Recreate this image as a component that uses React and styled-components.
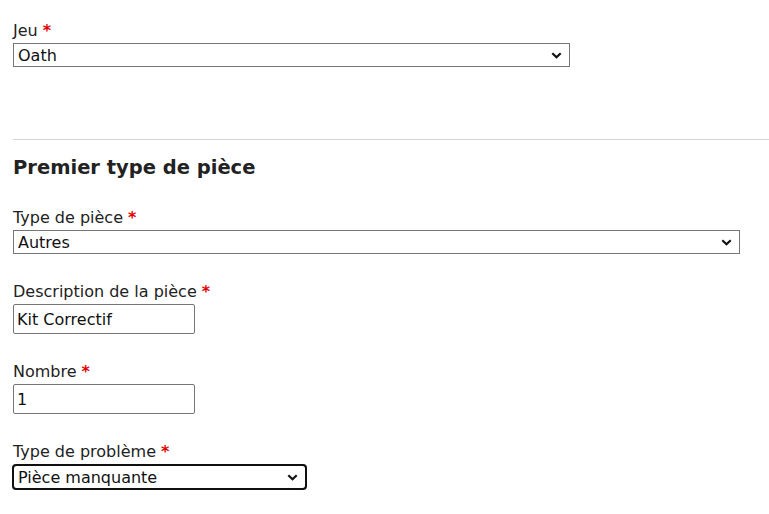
import React from 'react'
import styled, { createGlobalStyle } from 'styled-components'

const GlobalStyle = createGlobalStyle`
    body {
        margin: 0;
        background: #fff;
        font-family: "DejaVu Sans", "Noto Sans", sans-serif;
        color: #222;
    }
`

const chevron = `url("data:image/svg+xml,%3Csvg xmlns='http://www.w3.org/2000/svg' width='11' height='7' viewBox='0 0 11 7'%3E%3Cpath d='M1.3 1.3 L5.5 5.3 L9.7 1.3' fill='none' stroke='%23111' stroke-width='2.2'/%3E%3C/svg%3E")`

const Page = styled.form `
    padding: 19px 0 0 13px;
`

const Field = styled.div `
    display: flex;
    flex-direction: column;
    align-items: flex-start;
    margin-bottom: 26px;
`

const Label = styled.label `
    font-size: 16px;
    line-height: 24px;
    height: 24px;
    color: #222;
`

const Required = styled.span `
    color: #e00000;
    font-weight: 700;
    margin-left: 5px;
`

const Select = styled.select `
    appearance: none;
    width: ${props => props.width}px;
    height: 24px;
    font-family: inherit;
    font-size: 16px;
    color: #111;
    background: #fff ${chevron} no-repeat right 7px center;
    border: 1px solid #767676;
    border-radius: ${props => props.focused ? '3px' : '0'};
    padding: 0 24px 0 4px;
    margin: ${props => props.focused ? '1px 0 0 0' : '0'};
    outline: ${props => props.focused ? '2px solid #101010' : 'none'};
    outline-offset: -1px;
    box-sizing: border-box;
`

const Input = styled.input `
    width: 182px;
    height: 30px;
    font-family: inherit;
    font-size: 16px;
    color: #111;
    border: 1px solid #767676;
    border-radius: 2px;
    padding: 0 3px;
    margin: 0;
    box-sizing: border-box;
`

const Divider = styled.hr `
    border: none;
    border-top: 1px solid #d4d4d4;
    margin: 72px 0 14px 0;
`

const Heading = styled.h2 `
    font-size: 19.5px;
    font-weight: 700;
    line-height: 28px;
    margin: 0 0 24px 0;
    color: #222;
`

function App() {
    return (
        <>
            <GlobalStyle/>
            <Page>
                <Field>
                    <Label>Jeu<Required>*</Required></Label>
                    <Select width={557} defaultValue="oath">
                        <option value="oath">Oath</option>
                    </Select>
                </Field>

                <Divider/>

                <Heading>Premier type de pièce</Heading>

                <Field>
                    <Label>Type de pièce<Required>*</Required></Label>
                    <Select width={727} defaultValue="autres">
                        <option value="autres">Autres</option>
                    </Select>
                </Field>

                <Field>
                    <Label>Description de la pièce<Required>*</Required></Label>
                    <Input type="text" defaultValue="Kit Correctif"/>
                </Field>

                <Field>
                    <Label>Nombre<Required>*</Required></Label>
                    <Input type="text" defaultValue="1"/>
                </Field>

                <Field>
                    <Label>Type de problème<Required>*</Required></Label>
                    <Select width={293} focused defaultValue="manquante">
                        <option value="manquante">Pièce manquante</option>
                    </Select>
                </Field>
            </Page>
        </>
    )
}

export default App
